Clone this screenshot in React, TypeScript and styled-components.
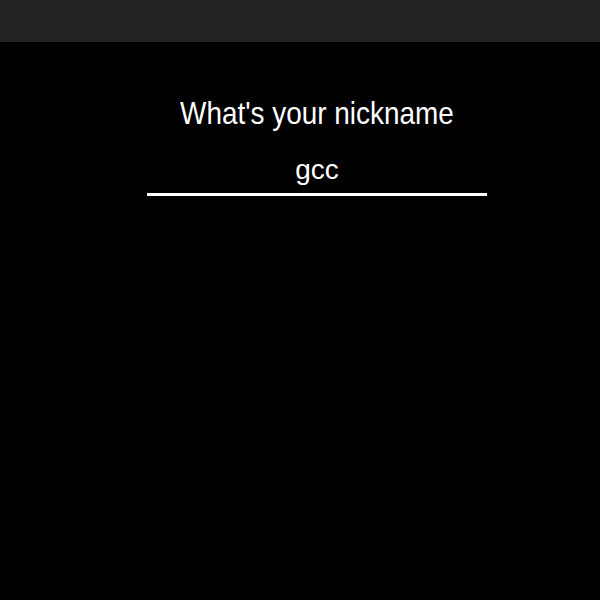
import React from "react";
import styled, { createGlobalStyle } from "styled-components";

const Global = createGlobalStyle`
  html, body { margin: 0; padding: 0; background: #000; }
  body { font-family: "Liberation Sans", Arial, sans-serif; }
`;

const Page = styled.div`
  width: 600px;
  height: 600px;
  background: #000;
  display: flex;
  flex-direction: column;
`;

const TopBar = styled.div`
  height: 41px;
  background: #222222;
  border-bottom: 1px solid #2a2a2a;
  flex-shrink: 0;
`;

const Content = styled.div`
  flex: 1;
  display: flex;
  justify-content: center;
  padding-left: 34px;
  padding-top: 52px;
`;

const Form = styled.div`
  width: 340px;
  display: flex;
  flex-direction: column;
  align-items: center;
`;

const Title = styled.h1`
  margin: 0;
  font-family: "Liberation Sans", Arial, sans-serif;
  font-weight: 400;
  font-size: 32px;
  line-height: 38px;
  color: #fff;
  white-space: nowrap;
  transform: scaleX(0.872);
`;

const Input = styled.input`
  margin-top: 22px;
  width: 100%;
  box-sizing: border-box;
  background: transparent;
  border: none;
  border-bottom: 3px solid #fff;
  outline: none;
  color: #fff;
  text-align: center;
  font-family: "Liberation Sans", Arial, sans-serif;
  font-size: 28px;
  padding: 0 0 7px;
`;

export default function App() {
  return (
    <Page>
      <Global />
      <TopBar />
      <Content>
        <Form>
          <Title>What's your nickname</Title>
          <Input defaultValue="gcc" />
        </Form>
      </Content>
    </Page>
  );
}
